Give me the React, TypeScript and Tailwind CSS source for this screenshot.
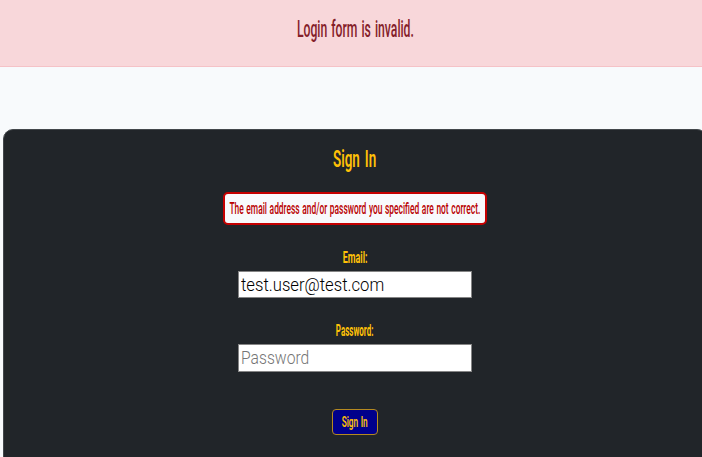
import type { ReactNode } from "react";

function Narrow({ className, children }: { className: string; children: ReactNode }) {
  return (
    <span className={`inline-block shrink-0 whitespace-nowrap font-['Roboto','Liberation_Sans',sans-serif] ${className}`}>
      {children}
    </span>
  );
}

const field =
  "flex w-[234px] items-center overflow-hidden border border-[#858585] bg-white pl-[2px]";

export default function App() {
  return (
    <div className="h-[457px] w-full overflow-hidden bg-[#f8fafc]">
      <div className="flex w-[710px] flex-col">
        <div className="flex h-[67px] justify-center border-b border-[#f5c2c7] bg-[#f8d7da] pt-[14px] pl-[1px]">
          <Narrow className="scale-x-[0.53] text-[23px]/8 font-medium [word-spacing:2px] text-[#842029]">Login form is invalid.</Narrow>
        </div>
        <main className="mt-[62px] ml-[3px] flex h-[400px] w-[704px] flex-col items-center rounded-[10px] border border-[#43474b] bg-[#212529]">
          <h1 className="mt-[13px] flex h-[32px] w-full justify-center">
            <Narrow className="scale-x-[0.56] text-2xl/8 font-semibold [word-spacing:3px] text-[#ffc107]">Sign In</Narrow>
          </h1>
          <div className="mt-[17px] flex h-[33px] w-[264px] items-center justify-center rounded-[5px] border-2 border-[#c40000] bg-[#f8fafc]">
            <Narrow className="scale-x-[0.525] text-base/6 font-medium [word-spacing:1px] text-[#b80000]">
              The email address and/or password you specified are not correct.
            </Narrow>
          </div>
          <label className="mt-[21px] flex h-[24px] w-full justify-center">
            <Narrow className="scale-x-[0.56] text-base/6 font-bold text-[#ffc107]">Email:</Narrow>
          </label>
          <div className={`${field} mt-[1px] h-[27px]`}>
            <Narrow className="origin-left scale-x-[0.925] text-lg/6 font-light text-black">test.user@test.com</Narrow>
          </div>
          <label className="mt-[21px] flex h-[24px] w-full justify-center">
            <Narrow className="scale-x-[0.5] text-base/6 font-bold text-[#ffc107]">Password:</Narrow>
          </label>
          <div className={`${field} mt-[1px] h-[28px]`}>
            <Narrow className="origin-left scale-x-[0.87] text-lg/6 font-light text-[#757575]">Password</Narrow>
          </div>
          <button className="mt-[37px] flex h-[26px] w-[46px] items-center justify-center rounded-[4px] border border-[#b58a20] bg-[#00008b]">
            <Narrow className="scale-x-[0.55] text-[15px]/6 font-semibold [word-spacing:1px] text-[#ffc107]">Sign In</Narrow>
          </button>
        </main>
      </div>
    </div>
  );
}
